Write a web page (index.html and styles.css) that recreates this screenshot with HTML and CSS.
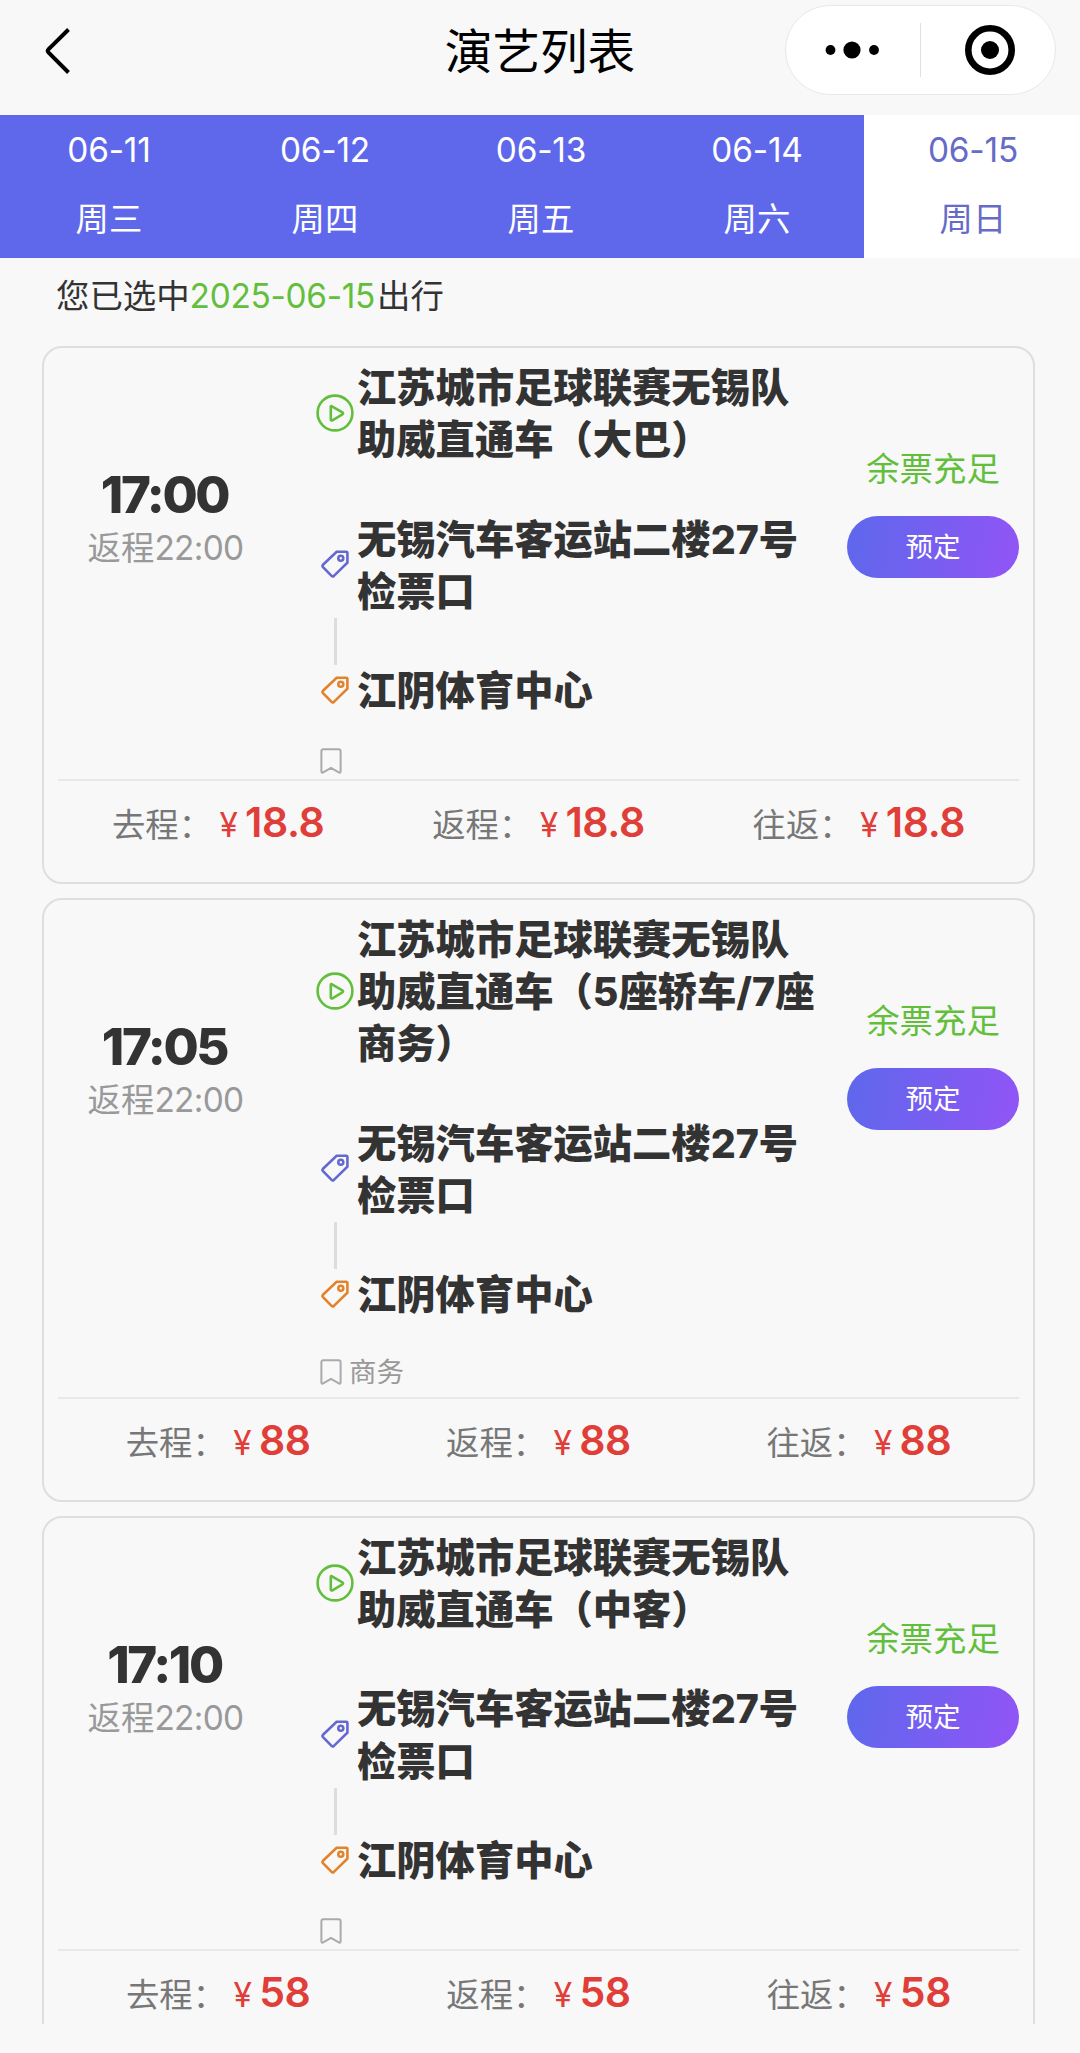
FILE: index.html
```html
<!DOCTYPE html>
<html lang="zh-CN">
<head>
<meta charset="utf-8">
<title>演艺列表</title>
<link rel="stylesheet" href="styles.css">
</head>
<body>
<svg class="sprite" aria-hidden="true">
  <symbol id="play" viewBox="0 0 38 38">
    <circle cx="19" cy="19" r="17.4"/>
    <path d="M14.8 12.6v12.8c0 1 .8 1.3 1.6.9l10-6c.9-.5.9-1.4 0-1.9l-10-5.8c-.8-.5-1.6-.9-1.6 0z"/>
  </symbol>
  <symbol id="tag" viewBox="0 0 28 28">
    <path d="M15.6 1.8h9.6c.7 0 1.2.5 1.2 1.2v9.800L12.900 25.900c-.8.7-1.600.7-2.300 0L2 17.100c-.7-.8-.7-1.600 0-2.300z"/>
    <circle cx="19.8" cy="8.2" r="2.5"/>
  </symbol>
  <symbol id="mark" viewBox="0 0 22 26">
    <path d="M3.4 1.2h15.2c1.2 0 2 .8 2 2v20.300c0 1.100-.9 1.500-1.800.9L11 20l-7.800 4.400c-.9.6-1.800.2-1.800-.9V3.200c0-1.200.8-2 2-2z"/>
  </symbol>
</svg>

<header class="nav">
  <svg class="back" viewBox="0 0 26 48"><path d="M23.500 2.500 3.400 22.300c-1 1-1 2 0 3L23.500 45.500"/></svg>
  <h1 class="nav-title">演艺列表</h1>
  <div class="capsule">
    <svg class="dots" viewBox="0 0 54 18"><circle cx="5.500" cy="9" r="4.900"/><circle cx="27" cy="9" r="8.600"/><circle cx="49" cy="9" r="4.900"/></svg>
    <span class="capsule-line"></span>
    <svg class="target" viewBox="0 0 50 50"><circle class="ring" cx="25" cy="25" r="21.700"/><circle cx="25" cy="25" r="9"/></svg>
  </div>
</header>

<nav class="dates">
  <div class="date"><span>06-11</span><span>周三</span></div>
  <div class="date"><span>06-12</span><span>周四</span></div>
  <div class="date"><span>06-13</span><span>周五</span></div>
  <div class="date"><span>06-14</span><span>周六</span></div>
  <div class="date active"><span>06-15</span><span>周日</span></div>
</nav>

<p class="chosen">您已选中<span class="chosen-date">2025-06-15</span>出行</p>

<main class="list">
  <article class="card">
    <div class="trip">
      <div class="times"><div class="depart">17:00</div><div class="return">返程<span>22:00</span></div></div>
      <div class="route">
        <div class="row"><svg class="icon play"><use href="#play"/></svg><div>江苏城市足球联赛无锡队<br>助威直通车（大巴）</div></div>
        <div class="row from"><svg class="icon tag"><use href="#tag"/></svg><div>无锡汽车客运站二楼<span class="num">27</span>号<br>检票口</div></div>
        <div class="link"></div>
        <div class="row"><svg class="icon tag end"><use href="#tag"/></svg><div>江阴体育中心</div></div>
        <div class="note"><svg class="mark"><use href="#mark"/></svg></div>
      </div>
      <div class="action"><div class="stock">余票充足</div><button class="book">预定</button></div>
    </div>
    <div class="prices">
      <div>去程：<span class="price"><i>¥</i><b>18.8</b></span></div>
      <div>返程：<span class="price"><i>¥</i><b>18.8</b></span></div>
      <div>往返：<span class="price"><i>¥</i><b>18.8</b></span></div>
    </div>
  </article>

  <article class="card">
    <div class="trip">
      <div class="times"><div class="depart">17:05</div><div class="return">返程<span>22:00</span></div></div>
      <div class="route">
        <div class="row"><svg class="icon play"><use href="#play"/></svg><div>江苏城市足球联赛无锡队<br>助威直通车（<span class="num">5</span>座轿车<span class="num">/7</span>座<br>商务）</div></div>
        <div class="row from"><svg class="icon tag"><use href="#tag"/></svg><div>无锡汽车客运站二楼<span class="num">27</span>号<br>检票口</div></div>
        <div class="link"></div>
        <div class="row"><svg class="icon tag end"><use href="#tag"/></svg><div>江阴体育中心</div></div>
        <div class="note"><svg class="mark"><use href="#mark"/></svg><span>商务</span></div>
      </div>
      <div class="action"><div class="stock">余票充足</div><button class="book">预定</button></div>
    </div>
    <div class="prices">
      <div>去程：<span class="price"><i>¥</i><b>88</b></span></div>
      <div>返程：<span class="price"><i>¥</i><b>88</b></span></div>
      <div>往返：<span class="price"><i>¥</i><b>88</b></span></div>
    </div>
  </article>

  <article class="card">
    <div class="trip">
      <div class="times"><div class="depart">17:10</div><div class="return">返程<span>22:00</span></div></div>
      <div class="route">
        <div class="row"><svg class="icon play"><use href="#play"/></svg><div>江苏城市足球联赛无锡队<br>助威直通车（中客）</div></div>
        <div class="row from"><svg class="icon tag"><use href="#tag"/></svg><div>无锡汽车客运站二楼<span class="num">27</span>号<br>检票口</div></div>
        <div class="link"></div>
        <div class="row"><svg class="icon tag end"><use href="#tag"/></svg><div>江阴体育中心</div></div>
        <div class="note"><svg class="mark"><use href="#mark"/></svg></div>
      </div>
      <div class="action"><div class="stock">余票充足</div><button class="book">预定</button></div>
    </div>
    <div class="prices">
      <div>去程：<span class="price"><i>¥</i><b>58</b></span></div>
      <div>返程：<span class="price"><i>¥</i><b>58</b></span></div>
      <div>往返：<span class="price"><i>¥</i><b>58</b></span></div>
    </div>
  </article>
</main>
</body>
</html>
```
FILE: styles.css
```css
* { box-sizing: border-box; }

body {
  margin: 0;
  height: 2053px;
  display: flex;
  flex-direction: column;
  overflow: hidden;
  background: #f8f8f8;
  color: #333;
  font: 400 33.4px/44px Inter, "Noto Sans CJK SC", sans-serif;
}

.sprite { display: none; }

/* Title bar */
.nav {
  flex: none;
  height: 115px;
  padding: 5px 24px 20px 45px;
  display: grid;
  grid-template-columns: 270px 1fr 271px;
  align-items: center;
}
.back { width: 26px; height: 48px; margin-top: 1px; fill: none; stroke: #000; stroke-width: 4; }
.nav-title {
  margin: 3px 20px 0 0;
  text-align: center;
  white-space: nowrap;
  color: #000;
  font-size: 47.600px;
  font-weight: 400;
  line-height: 60px;
}
.capsule {
  height: 90px;
  display: flex;
  align-items: center;
  border: 1px solid #e8e8e8;
  border-radius: 45px;
  background: #fff;
}
.dots { width: 54px; height: 18px; margin-left: 39px; }
.capsule-line { width: 1px; height: 54px; margin: 0 44px 0 41px; background: #e0e0e0; }
.target { width: 50px; height: 50px; }
.ring { fill: none; stroke: #000; stroke-width: 6.6; }

/* Date tabs */
.dates {
  flex: none;
  height: 143px;
  display: grid;
  grid-template-columns: repeat(5, 1fr);
  background: #5f68eb;
  color: #fff;
}
.date {
  display: flex;
  flex-direction: column;
  align-items: center;
  gap: 25px;
  padding: 13px 0 0 2px;
}
.date.active { background: #fff; color: #666bc8; }
.date span:first-child { letter-spacing: -0.2px; }

.chosen { flex: none; margin: 16px 0 28px 56px; }
.chosen-date { margin-right: 2px; letter-spacing: -0.3px; color: #62bf3c; }

/* Trip cards */
.list {
  flex: none;
  height: 1678px;
  overflow: hidden;
  padding: 0 45px 0 42px;
  display: flex;
  flex-direction: column;
  gap: 14px;
}
.card {
  flex: none;
  border: 2px solid #dedede;
  border-radius: 20px;
  padding: 13px 14px 0;
}
.trip {
  display: grid;
  grid-template-columns: 213px 1fr 172px;
  padding-bottom: 5px;
  border-bottom: 2px solid #e8e8e8;
}
.times { padding-top: 106px; text-align: center; }
.depart { font-size: 51px; font-weight: 800; line-height: 56px; letter-spacing: -2.400px; }
.return { margin-top: 3px; padding-left: 2px; color: #999; line-height: 44px; }
.return span { letter-spacing: -0.7px; }

.route { padding-left: 45px; }
.row {
  display: flex;
  align-items: center;
  white-space: nowrap;
  font-size: 39.300px;
  font-weight: 900;
  line-height: 52.300px;
}
.row div { padding-top: 1px; margin-bottom: -1px; }
.from { margin-top: 47px; }
.icon { flex: none; fill: none; stroke-width: 2.600; }
.play { width: 38px; height: 38px; margin: 0 3px 1px 0; stroke: #62bf3c; }
.tag { width: 28px; height: 28px; margin: 0 8px 1px 5px; stroke: #6468d0; }
.tag.end { stroke: #e2832b; }
.num { font-weight: 800; }
.link { width: 3px; height: 47px; margin: 1px 0 -1px 18px; background: #ddd; }
.note {
  min-height: 26px;
  margin: 31.300px 0 0 4px;
  display: flex;
  align-items: center;
  gap: 7px;
  color: #999;
  font-size: 27.500px;
  line-height: 40px;
}
.mark { width: 22px; height: 26px; fill: none; stroke: #aaa; stroke-width: 2; }

.action {
  padding-top: 86px;
  display: flex;
  flex-direction: column;
  align-items: center;
  gap: 25px;
}
.stock { color: #62bf3c; }
.book {
  width: 172px;
  height: 62px;
  padding: 0;
  border: 0;
  border-radius: 31px;
  background: linear-gradient(100deg, #5d68ec, #9254f6);
  color: #fff;
  font: inherit;
  font-size: 27.500px;
  line-height: 60px;
}

.prices {
  height: 101px;
  padding-top: 19px;
  display: grid;
  grid-template-columns: repeat(3, 1fr);
  text-align: center;
  white-space: nowrap;
  color: #777;
}
.price { color: #e03e38; }
.price i { display: inline-block; width: 33px; font-style: normal; }
.price b { font-size: 41px; font-weight: 600; line-height: 44px; letter-spacing: -0.4px; }
```
